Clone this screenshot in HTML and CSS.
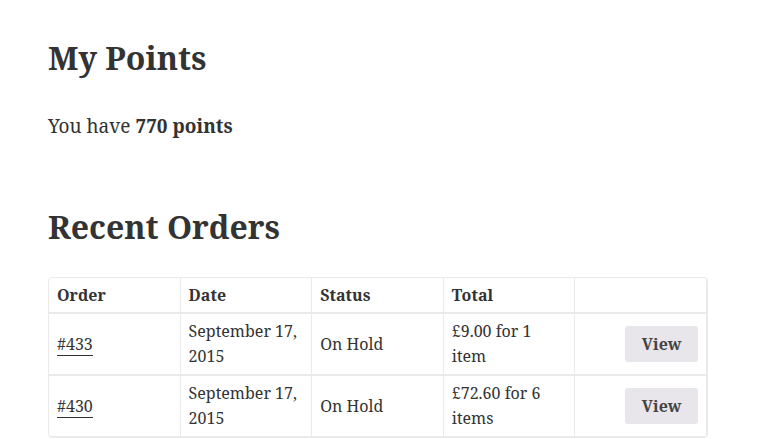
FILE: index.html
```html
<!DOCTYPE html>
<html>
<head>
<meta charset="utf-8">
<link rel="stylesheet" href="styles.css">
</head>
<body>
<main class="content">
  <h2 class="title">My Points</h2>
  <p class="points">You have <strong>770 points</strong></p>
  <h2 class="title recent">Recent Orders</h2>
  <table class="orders">
    <thead>
      <tr>
        <th>Order</th>
        <th>Date</th>
        <th>Status</th>
        <th>Total</th>
        <th></th>
      </tr>
    </thead>
    <tbody>
      <tr>
        <td><a href="#">#433</a></td>
        <td>September 17, 2015</td>
        <td>On Hold</td>
        <td>£9.00 for 1 item</td>
        <td class="actions"><a class="button" href="#">View</a></td>
      </tr>
      <tr>
        <td><a href="#">#430</a></td>
        <td>September 17, 2015</td>
        <td>On Hold</td>
        <td>£72.60 for 6 items</td>
        <td class="actions"><a class="button" href="#">View</a></td>
      </tr>
    </tbody>
  </table>
</main>
</body>
</html>
```
FILE: styles.css
```css
html, body {
  margin: 0;
  padding: 0;
  background: #ffffff;
}
body {
  font-family: "Noto Serif", "DejaVu Serif", serif;
  color: #333333;
}
.content {
  padding: 38px 68px 0 48px;
}
.title {
  font-size: 32px;
  font-weight: 700;
  line-height: 40px;
  margin: 0;
}
.points {
  font-size: 19px;
  line-height: 28px;
  margin: 34px 0 0;
}
.points strong {
  font-weight: 700;
}
.recent {
  margin-top: 67px;
}
.orders {
  margin-top: 30px;
  width: 660px;
  border-collapse: separate;
  border-spacing: 0;
  border: 1px solid #eaeaea;
  border-radius: 4px;
  font-size: 16px;
  line-height: 25px;
  table-layout: fixed;
}
.orders th,
.orders td {
  text-align: left;
  vertical-align: middle;
  border-right: 1px solid #eaeaea;
}
.orders th {
  font-weight: 700;
  padding: 5px 8px 4px;
  border-bottom: 1px solid #eaeaea;
}
.orders td {
  border-top: 1px solid #eaeaea;
  border-bottom: 1px solid #eaeaea;
  padding: 5px 8px;
}
.orders a {
  color: #333333;
  text-decoration: none;
  border-bottom: 1px solid #333333;
}
.orders td.actions {
  text-align: right;
}
.orders a.button {
  display: inline-block;
  border: 0;
  background: #e8e6ea;
  border-radius: 3px;
  padding: 5px 16.5px;
  font-weight: 700;
  line-height: 26px;
  color: #444444;
}
```
